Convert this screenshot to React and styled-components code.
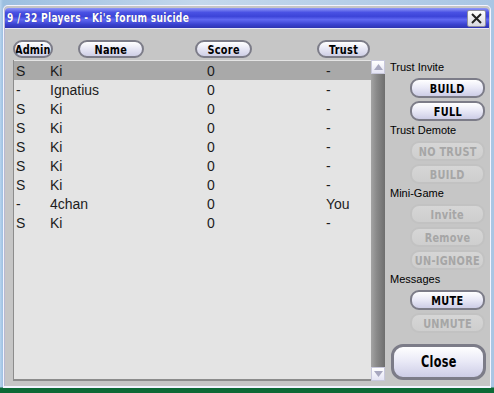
import React from 'react';
import styled, { createGlobalStyle } from 'styled-components';

const GlobalStyle = createGlobalStyle`
  html, body { margin: 0; padding: 0; }
  body {
    width: 494px;
    height: 393px;
    overflow: hidden;
    font-family: "Liberation Sans", Arial, sans-serif;
  }
`;

const players = [
  { admin: 'S', name: 'Ki', score: 0, trust: '-', selected: true },
  { admin: '-', name: 'Ignatius', score: 0, trust: '-' },
  { admin: 'S', name: 'Ki', score: 0, trust: '-' },
  { admin: 'S', name: 'Ki', score: 0, trust: '-' },
  { admin: 'S', name: 'Ki', score: 0, trust: '-' },
  { admin: 'S', name: 'Ki', score: 0, trust: '-' },
  { admin: 'S', name: 'Ki', score: 0, trust: '-' },
  { admin: '-', name: '4chan', score: 0, trust: 'You' },
  { admin: 'S', name: 'Ki', score: 0, trust: '-' },
];

const Desktop = styled.div`
  width: 494px;
  height: 393px;
  background:
    linear-gradient(to bottom, transparent 387px, #0c6a36 388px),
    linear-gradient(to right, #b8d4ee, #9cbfe0 3px, #c4d8ec 200px, #a9c6e4);
  padding: 5px 0 0 3px;
  box-sizing: border-box;
`;

const Window = styled.div`
  width: 488px;
  height: 383px;
  box-sizing: border-box;
  border: 1px solid #f4f4ff;
  border-bottom-width: 2px;
  border-radius: 5px 5px 0 0;
  background: #c6c6c6;
  box-shadow: inset 1px 0 0 #b8b8d0;
  display: flex;
  flex-direction: column;
`;

const TitleBar = styled.div`
  flex-shrink: 0;
  height: 20px;
  margin: 2px 1px 0 1px;
  border-radius: 4px 4px 0 0;
  background: linear-gradient(#9098f8 0%, #4a52e4 22%, #3c44d8 42%, #6068f2 58%, #3a42d0 82%, #2e34b0 100%);
  display: flex;
  align-items: center;
  justify-content: space-between;
  padding: 0 3px 0 2px;
  border-bottom: 1px solid #e8e8f4;
`;

const Caption = styled.span`
  display: inline-block;
  white-space: nowrap;
  font-family: "DejaVu Sans", Verdana, sans-serif;
  font-weight: bold;
  font-size: ${p => p.$size || 13}px;
  letter-spacing: ${p => p.$spacing ?? 0.4}px;
  transform: scaleX(${p => p.$scale || 0.75});
  transform-origin: ${p => (p.$left ? 'left' : 'center')} center;
`;

const TitleText = styled(Caption)`
  color: #fff;
  text-shadow: 0 0 1px #2a2a90;
`;

const CloseX = styled.div`
  width: 19px;
  height: 17px;
  box-sizing: border-box;
  background: linear-gradient(#ffffff, #d8d8e0);
  border: 1px solid #9090a0;
  border-radius: 2px;
  display: flex;
  align-items: center;
  justify-content: center;
`;

const Body = styled.div`
  flex: 1;
  min-height: 0;
  display: flex;
  padding: 11px 0 0 9px;
`;

const LeftColumn = styled.div`
  width: 372px;
  display: flex;
  flex-direction: column;
`;

const HeaderRow = styled.div`
  display: grid;
  grid-template-columns: 65px 117px 122px 1fr;
  height: 18px;
  margin-bottom: 2px;
`;

const Pill = styled.div`
  width: ${p => p.$w}px;
  height: 18px;
  box-sizing: border-box;
  border: 2px solid #7c7c88;
  border-radius: 9px;
  background: linear-gradient(#ffffff, #e6e6f4 50%, #cfcfe6);
  display: flex;
  align-items: center;
  justify-content: center;
  overflow: hidden;
  color: #000;
`;

const ListFrame = styled.div`
  display: flex;
  height: 321px;
`;

const List = styled.div`
  flex: 1;
  background: #e4e4e4;
  border-left: 1px solid #8c8c8c;
  border-bottom: 2px solid #8c8c8c;
  padding-top: 1px;
`;

const Row = styled.div`
  display: grid;
  grid-template-columns: 34px 157px 119px 1fr;
  height: 19px;
  align-items: center;
  padding-left: 2px;
  background: ${p => (p.$selected ? '#a9a9a9' : 'transparent')};
  font-size: 14px;
  color: #1c1c1c;
`;

const Scrollbar = styled.div`
  width: 14px;
  display: flex;
  flex-direction: column;
  background: linear-gradient(to right, #a4a4a4, #8a8a8a 40%, #6e6e6e);
`;

const ScrollButton = styled.div`
  height: 14px;
  background: linear-gradient(#ffffff, #e4e4f4);
  border: 1px solid #c8c8dc;
  box-sizing: border-box;
  display: flex;
  align-items: center;
  justify-content: center;
`;

const Track = styled.div`
  flex: 1;
`;

const SidePanel = styled.div`
  width: 97px;
  margin-left: 5px;
  padding-top: 20px;
  display: flex;
  flex-direction: column;
`;

const Label = styled.div`
  height: 14px;
  line-height: 14px;
  font-size: 11px;
  color: #000;
  margin-top: ${p => (p.$first ? 0 : -1)}px;
  margin-bottom: 4px;
`;

const Button = styled.div`
  width: 75px;
  height: 20px;
  margin-left: 20px;
  margin-bottom: 3px;
  box-sizing: border-box;
  border-radius: 9px;
  border: 2px solid ${p => (p.$disabled ? '#c2c2c2' : '#7c7c88')};
  background: ${p =>
    p.$disabled
      ? 'linear-gradient(#d6d6d6, #cecece)'
      : 'linear-gradient(#ffffff, #e8e8f6 50%, #cdcde6)'};
  color: ${p => (p.$disabled ? '#a6a6a6' : '#000')};
  display: flex;
  align-items: center;
  justify-content: center;
  overflow: hidden;
`;

const BigButton = styled(Button)`
  width: 95px;
  height: 36px;
  margin-left: 1px;
  margin-top: 8px;
  border-radius: 12px;
  border-width: 3px;
`;

const Arrow = ({ down }) => (
  <svg width="9" height="6" viewBox="0 0 9 6">
    <polygon points={down ? '0,0 9,0 4.5,6' : '0,6 9,6 4.5,0'} fill="#a8a8c0" />
  </svg>
);

const Btn = ({ children, disabled }) => (
  <Button $disabled={disabled}>
    <Caption>{children}</Caption>
  </Button>
);

export default function App() {
  return (
    <Desktop>
      <GlobalStyle />
      <Window>
        <TitleBar>
          <TitleText $left $size={12} $scale={0.76} $spacing={0.4}>9 / 32 Players - Ki's forum suicide</TitleText>
          <CloseX>
            <svg width="11" height="11" viewBox="0 0 11 11">
              <path d="M1 1 L10 10 M10 1 L1 10" stroke="#222" strokeWidth="2" />
            </svg>
          </CloseX>
        </TitleBar>
        <Body>
          <LeftColumn>
            <HeaderRow>
              <Pill $w={40}><Caption $spacing={0.2}>Admin</Caption></Pill>
              <Pill $w={66}><Caption>Name</Caption></Pill>
              <Pill $w={57}><Caption>Score</Caption></Pill>
              <Pill $w={53}><Caption>Trust</Caption></Pill>
            </HeaderRow>
            <ListFrame>
              <List>
                {players.map((p, i) => (
                  <Row key={i} $selected={p.selected}>
                    <span>{p.admin}</span>
                    <span>{p.name}</span>
                    <span>{p.score}</span>
                    <span>{p.trust}</span>
                  </Row>
                ))}
              </List>
              <Scrollbar>
                <ScrollButton><Arrow /></ScrollButton>
                <Track />
                <ScrollButton><Arrow down /></ScrollButton>
              </Scrollbar>
            </ListFrame>
          </LeftColumn>
          <SidePanel>
            <Label $first>Trust Invite</Label>
            <Btn>BUILD</Btn>
            <Btn>FULL</Btn>
            <Label>Trust Demote</Label>
            <Btn disabled>NO TRUST</Btn>
            <Btn disabled>BUILD</Btn>
            <Label>Mini-Game</Label>
            <Btn disabled>Invite</Btn>
            <Btn disabled>Remove</Btn>
            <Btn disabled>UN-IGNORE</Btn>
            <Label>Messages</Label>
            <Btn>MUTE</Btn>
            <Btn disabled>UNMUTE</Btn>
            <BigButton>
              <Caption $size={15} $scale={0.75}>Close</Caption>
            </BigButton>
          </SidePanel>
        </Body>
      </Window>
    </Desktop>
  );
}
